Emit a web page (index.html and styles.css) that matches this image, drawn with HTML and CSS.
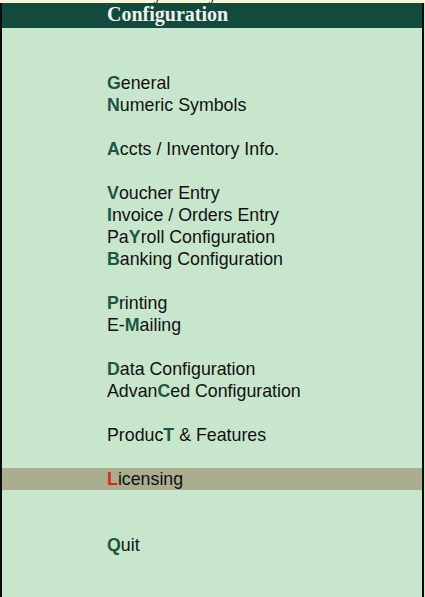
FILE: index.html
```html
<!DOCTYPE html>
<html>
<head>
<meta charset="utf-8">
<link rel="stylesheet" href="styles.css">
</head>
<body>
<div class="topstrip"><span class="toptext">Gateway of Tally</span></div>
<div class="panel">
  <div class="header">Configuration</div>
  <div class="menu">
    <div class="row"><b class="k">G</b>eneral</div>
    <div class="row"><b class="k">N</b>umeric Symbols</div>
    <div class="row gap"></div>
    <div class="row"><b class="k">A</b>ccts / Inventory Info.</div>
    <div class="row gap"></div>
    <div class="row"><b class="k">V</b>oucher Entry</div>
    <div class="row"><b class="k">I</b>nvoice / Orders Entry</div>
    <div class="row">Pa<b class="k">Y</b>roll Configuration</div>
    <div class="row"><b class="k">B</b>anking Configuration</div>
    <div class="row gap"></div>
    <div class="row"><b class="k">P</b>rinting</div>
    <div class="row">E-<b class="k">M</b>ailing</div>
    <div class="row gap"></div>
    <div class="row"><b class="k">D</b>ata Configuration</div>
    <div class="row">Advan<b class="k">C</b>ed Configuration</div>
    <div class="row gap"></div>
    <div class="row">Produc<b class="k">T</b> &amp; Features</div>
    <div class="row gap"></div>
    <div class="row active"><b class="k">L</b>icensing</div>
    <div class="row gap"></div>
    <div class="row gap"></div>
    <div class="row"><b class="k">Q</b>uit</div>
  </div>
</div>
</body>
</html>
```
FILE: styles.css
```css
html, body {
  margin: 0;
  padding: 0;
  background: #c8e6cb;
}
body {
  width: 425px;
  height: 597px;
  overflow: hidden;
}
.topstrip {
  height: 3px;
  background: #fbf5d6;
  overflow: hidden;
  position: relative;
}
.toptext {
  position: absolute;
  left: 101px;
  top: -14px;
  font-family: "Liberation Serif", serif;
  font-weight: bold;
  font-size: 16px;
  line-height: 18px;
  color: #111;
}
.panel {
  width: 420px;
  height: 594px;
  border-left: 2px solid #0c0c0c;
  border-right: 2px solid #0c0c0c;
  background: #c8e6cb;
}
.header {
  height: 25px;
  box-sizing: border-box;
  background: #124a3d;
  color: #eef3ee;
  font-family: "Liberation Serif", serif;
  font-weight: bold;
  font-size: 20px;
  line-height: 23px;
  padding-left: 105px;
}
.menu {
  padding-top: 44px;
  font-family: "Liberation Sans", Arial, sans-serif;
  font-size: 17.8px;
  color: #111;
}
.row {
  height: 22px;
  line-height: 22px;
  padding-left: 105px;
  white-space: nowrap;
}
.k {
  color: #1b5646;
  font-weight: bold;
}
.active {
  background: #aaae8e;
}
.active .k {
  color: #d42a1e;
}
```
